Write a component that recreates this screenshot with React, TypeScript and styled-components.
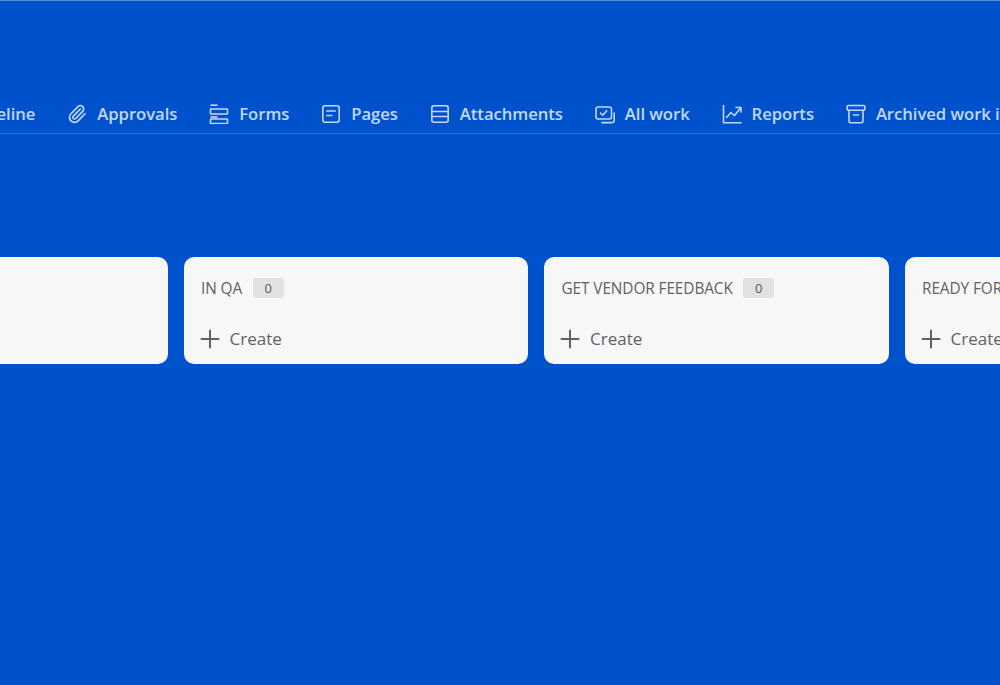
import React from 'react';
import styled, { createGlobalStyle } from 'styled-components';

const GlobalStyle = createGlobalStyle`
  html, body {
    margin: 0;
    padding: 0;
    height: 100%;
    overflow: hidden;
    background: #0052cc;
  }
  #root {
    height: 100%;
  }
`;

const iconProps = {
  width: 20,
  height: 20,
  viewBox: '2 2 20 20',
  fill: 'none',
  stroke: 'currentColor',
  strokeWidth: 1.6,
  strokeLinecap: 'round' as const,
  strokeLinejoin: 'round' as const,
};

const ClipIcon = () => (
  <svg {...iconProps} viewBox="0 0 24 24" strokeWidth={2}>
    <path d="m16 6-8.414 8.586a2 2 0 0 0 2.829 2.828l8.414-8.586a4 4 0 1 0-5.657-5.657l-8.379 8.551a6 6 0 1 0 8.485 8.485l8.379-8.551" />
  </svg>
);

const FormsIcon = () => (
  <svg {...iconProps} strokeLinecap="butt">
    <path d="M3.5 3.2h7" />
    <rect x="3.5" y="7" width="17" height="5" rx="0.6" />
    <path d="M3.5 15h7" />
    <rect x="3.5" y="17" width="17" height="4.5" rx="0.6" />
  </svg>
);

const PagesIcon = () => (
  <svg {...iconProps}>
    <rect x="3.8" y="3.8" width="16.4" height="16.4" rx="2.4" />
    <path d="M7.8 9h8.4M7.8 13.5h5" />
  </svg>
);

const AttachmentsIcon = () => (
  <svg {...iconProps}>
    <rect x="3.8" y="3.8" width="16.4" height="16.4" rx="2.4" />
    <path d="M3.8 9.5h16.4M3.8 14.5h16.4" />
  </svg>
);

const AllWorkIcon = () => (
  <svg {...iconProps}>
    <rect x="3" y="5" width="15.5" height="12" rx="2.2" />
    <path d="m7.5 11 2.2 2.2 4-4.4" />
    <path d="M21.2 11v7.4a2.2 2.2 0 0 1-2.2 2.2H9" />
  </svg>
);

const ReportsIcon = () => (
  <svg {...iconProps}>
    <path d="M3.5 3.5v17.2h17.5" />
    <path d="m6.5 15.5 4.5-5 3.5 3 6-7.5" />
    <path d="M16 5.5h5v4.5" />
  </svg>
);

const ArchiveIcon = () => (
  <svg {...iconProps}>
    <rect x="3.2" y="3.5" width="17.6" height="4.8" rx="1" />
    <path d="M5 8.3v10.5a2 2 0 0 0 2 2h10a2 2 0 0 0 2-2V8.3" />
    <path d="M9.5 13h5" />
  </svg>
);

const PlusIcon = () => (
  <svg width="20" height="20" viewBox="0 0 20 20" fill="none" stroke="currentColor" strokeWidth="2" strokeLinecap="round">
    <path d="M10 1.5v17M1.5 10h17" />
  </svg>
);

const tabs = [
  { label: 'Timeline' },
  { label: 'Approvals', icon: <ClipIcon /> },
  { label: 'Forms', icon: <FormsIcon /> },
  { label: 'Pages', icon: <PagesIcon /> },
  { label: 'Attachments', icon: <AttachmentsIcon /> },
  { label: 'All work', icon: <AllWorkIcon /> },
  { label: 'Reports', icon: <ReportsIcon /> },
  { label: 'Archived work items', icon: <ArchiveIcon /> },
];

const columns = [
  { title: '', count: null },
  { title: 'IN QA', count: 0 },
  { title: 'GET VENDOR FEEDBACK', count: 0 },
  { title: 'READY FOR RELEASE', count: 0 },
];

export default function App() {
  return (
    <Page>
      <GlobalStyle />
      <TabBar>
        {tabs.map((tab) => (
          <Tab key={tab.label}>
            {tab.icon}
            <span>{tab.label}</span>
          </Tab>
        ))}
      </TabBar>
      <Board>
        {columns.map((col) => (
          <Column key={col.title}>
            {col.title && (
              <>
                <ColumnHeader>
                  <ColumnTitle>{col.title}</ColumnTitle>
                  <Count>{col.count}</Count>
                </ColumnHeader>
                <CreateButton>
                  <PlusIcon />
                  Create
                </CreateButton>
              </>
            )}
          </Column>
        ))}
      </Board>
    </Page>
  );
}

const Page = styled.div`
  width: 1000px;
  height: 685px;
  overflow: hidden;
  background: #0052cc;
  border-top: 1px solid #5c8fdc;
  box-sizing: border-box;
  font-family: "Open Sans", "Noto Sans", "Liberation Sans", sans-serif;
`;

const TabBar = styled.nav`
  box-sizing: border-box;
  display: flex;
  align-items: center;
  gap: 31.9px;
  height: 41px;
  margin-top: 92px;
  padding-top: 1px;
  border-bottom: 1px solid #1f6fdc;
  white-space: nowrap;
  & > :first-child {
    margin-left: -33.4px;
  }
`;

const Tab = styled.div`
  display: flex;
  flex: none;
  align-items: center;
  gap: 10px;
  color: #c3d8f7;
  font-size: 16.7px;
  font-weight: 600;
  letter-spacing: -0.05px;
`;

const Board = styled.div`
  display: flex;
  gap: 16px;
  margin-top: 123px;
  margin-left: -177px;
`;

const Column = styled.section`
  flex: none;
  box-sizing: border-box;
  width: 344.5px;
  height: 107px;
  padding: 21px 17.5px 0;
  background: #f7f7f8;
  border-radius: 10px;
`;

const ColumnHeader = styled.header`
  display: flex;
  align-items: center;
  gap: 10.5px;
  height: 21px;
`;

const ColumnTitle = styled.span`
  color: #5e6268;
  font-size: 15.4px;
  font-weight: 500;
  letter-spacing: -0.1px;
  white-space: nowrap;
`;

const Count = styled.span`
  display: flex;
  align-items: center;
  justify-content: center;
  width: 31px;
  height: 20px;
  margin-top: -2px;
  border-radius: 3px;
  background: #dfe1e3;
  color: #55585e;
  font-size: 13px;
`;

const CreateButton = styled.div`
  display: flex;
  align-items: center;
  gap: 10px;
  margin-top: 28px;
  margin-left: -1.5px;
  color: #5e6268;
  font-size: 17px;
  font-weight: 500;
`;
